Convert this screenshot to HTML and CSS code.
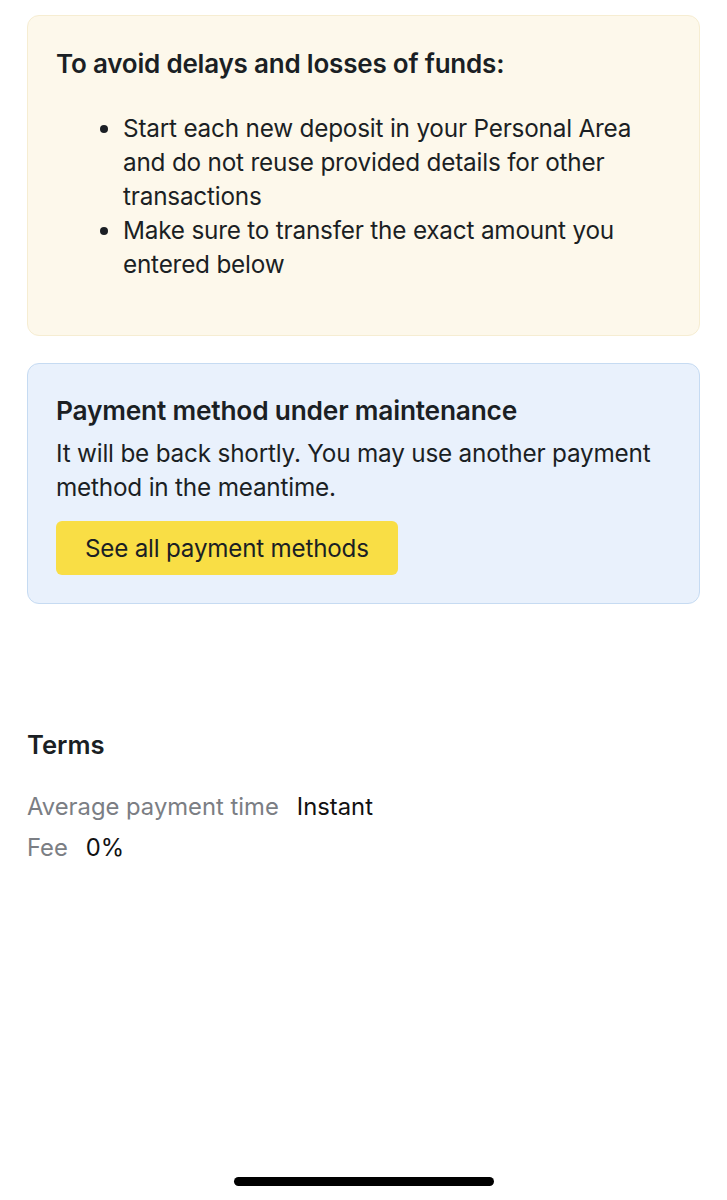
FILE: index.html
```html
<!DOCTYPE html>
<html lang="en">
<head>
<meta charset="utf-8">
<title>Deposit</title>
<link rel="stylesheet" href="styles.css">
</head>
<body>
<main class="page">
  <section class="card card-warn">
    <h2 class="warn-title">To avoid delays and losses of funds:</h2>
    <ul class="warn-list">
      <li>Start each new deposit in your Personal Area and do not reuse provided details for other transactions</li>
      <li>Make sure to transfer the exact amount you entered below</li>
    </ul>
  </section>

  <section class="card card-info">
    <h2 class="info-title">Payment method under maintenance</h2>
    <p class="info-text">It will be back shortly. You may use another payment method in the meantime.</p>
    <button class="btn" type="button">See all payment methods</button>
  </section>

  <section class="terms">
    <h2 class="terms-title">Terms</h2>
    <div class="term-row"><span class="term-label">Average payment time</span><span class="term-value">Instant</span></div>
    <div class="term-row"><span class="term-label">Fee</span><span class="term-value">0%</span></div>
  </section>
</main>
<div class="home-bar"></div>
</body>
</html>
```
FILE: styles.css
```css
* { box-sizing: border-box; }
html, body { margin: 0; padding: 0; background: #ffffff; }
body {
  width: 727px;
  height: 1200px;
  position: relative;
  font-family: Inter, "Noto Sans", sans-serif;
  color: #1b1f24;
  overflow: hidden;
}
.page {
  padding: 15px 27px 0 27px;
  display: flex;
  flex-direction: column;
}
.card {
  border-radius: 12px;
  border: 1px solid;
  padding: 0 28px;
}
.card-warn {
  background: #fdf8eb;
  border-color: #f6edd2;
  height: 321px;
  padding-top: 32px;
}
.warn-title {
  margin: 0;
  font-size: 26px;
  line-height: 32px;
  font-weight: 600;
  letter-spacing: -0.2px;
}
.warn-list {
  margin: 31px 0 0 0;
  padding-left: 67px;
  font-size: 24.3px;
  line-height: 34px;
  letter-spacing: -0.2px;
}
.card-info {
  margin-top: 27px;
  background: #e9f1fc;
  border-color: #c6dbf2;
  height: 241px;
  padding-top: 31px;
}
.info-title {
  margin: 0;
  font-size: 26.3px;
  line-height: 32px;
  font-weight: 600;
  letter-spacing: -0.2px;
}
.info-text {
  margin: 9px 0 0 0;
  font-size: 24.3px;
  line-height: 34px;
  letter-spacing: -0.2px;
}
.btn {
  margin-top: 17px;
  display: block;
  height: 54px;
  padding: 0 29px;
  background: #f9de45;
  border: none;
  border-radius: 6px;
  font-family: inherit;
  font-size: 24.2px;
  color: #1b1f24;
  letter-spacing: -0.2px;
}
.terms {
  margin-top: 126px;
  display: flex;
  flex-direction: column;
}
.terms-title {
  margin: 0 0 26px 0;
  font-size: 25.6px;
  line-height: 30px;
  font-weight: 600;
}
.term-row {
  display: flex;
  gap: 18px;
  font-size: 23.8px;
  line-height: 41px;
}
.term-label { color: #7b7e84; }
.term-value { color: #111111; }
.home-bar {
  position: absolute;
  left: 234px;
  top: 1177px;
  width: 260px;
  height: 9px;
  border-radius: 5px;
  background: #000;
}
```
